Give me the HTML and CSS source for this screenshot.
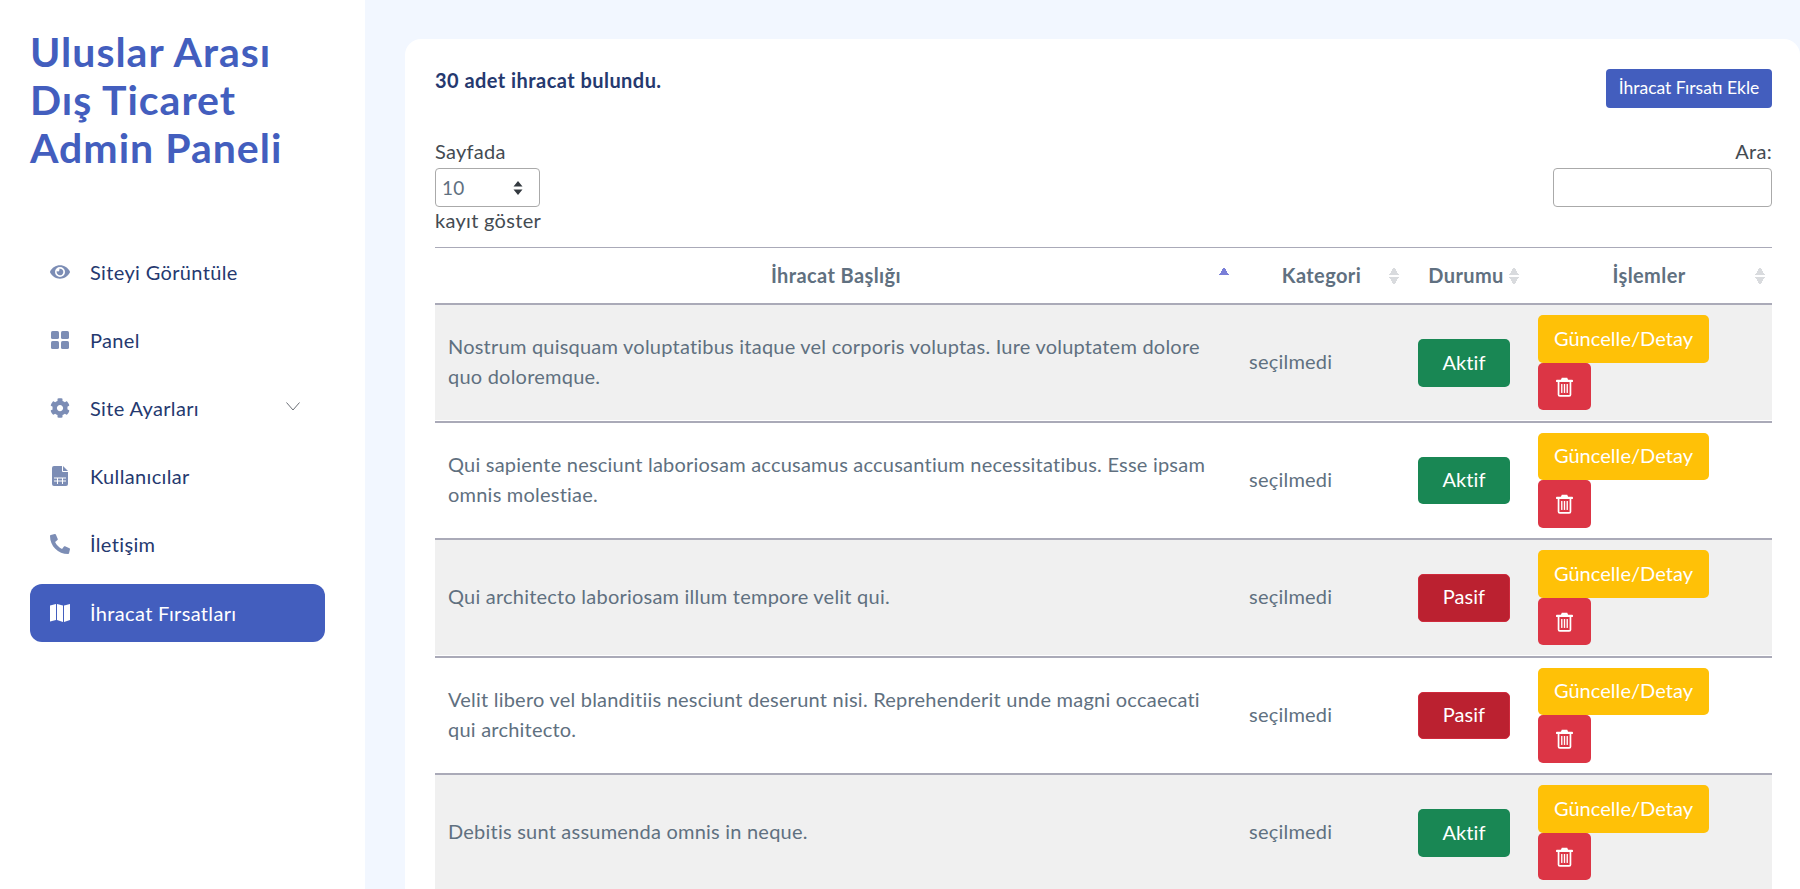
FILE: index.html
```html
<!DOCTYPE html>
<html lang="tr">
<head>
    <meta charset="UTF-8">
    <meta name="viewport" content="width=device-width, initial-scale=1.0">
    <title>Admin Paneli</title>
    <link rel="stylesheet" href="styles.css">
</head>
<body>
    <svg class="sprite">
        <symbol id="trash" viewBox="0 0 20 23">
            <rect x="0" y="3" width="20" height="2.600" rx="1"/>
            <path d="M5.500 3.500 6.800.6h6.400l1.300 2.900z"/>
            <path d="M2 5v15.500A2.500 2.500 0 0 0 4.500 23h11a2.500 2.500 0 0 0 2.500-2.500V5h-2v15.500a.5.5 0 0 1-.5.5h-11a.5.5 0 0 1-.5-.5V5z"/>
            <rect x="6" y="8" width="1.600" height="10.500"/>
            <rect x="9.200" y="8" width="1.600" height="10.500"/>
            <rect x="12.400" y="8" width="1.600" height="10.500"/>
        </symbol>
    </svg>

    <div class="shell">
        <aside class="sidebar">
            <h1 class="brand">Uluslar Arası<br>Dış Ticaret<br>Admin Paneli</h1>
            <nav class="menu">
                <a class="menu-item">
                    <svg class="menu-icon" viewBox="0 0 576 512"><path d="M572.52 241.4C518.29 135.59 410.93 64 288 64S57.68 135.64 3.48 241.41a32.35 32.35 0 0 0 0 29.19C57.71 376.41 165.07 448 288 448s230.32-71.64 284.52-177.41a32.35 32.35 0 0 0 0-29.19zM288 400a144 144 0 1 1 144-144 143.93 143.93 0 0 1-144 144zm0-240a95.31 95.31 0 0 0-25.31 3.79 47.85 47.85 0 0 1-66.9 66.9A95.78 95.78 0 1 0 288 160z"/></svg>
                    <span>Siteyi Görüntüle</span>
                </a>
                <a class="menu-item">
                    <svg class="menu-icon" viewBox="0 0 20 20"><rect x="1" y="1" width="8" height="8" rx="1.6"/><rect x="11" y="1" width="8" height="8" rx="1.6"/><rect x="1" y="11" width="8" height="8" rx="1.6"/><rect x="11" y="11" width="8" height="8" rx="1.6"/></svg>
                    <span>Panel</span>
                </a>
                <a class="menu-item">
                    <svg class="menu-icon" viewBox="0 0 512 512"><path d="M487.4 315.7l-42.6-24.6c4.3-23.2 4.3-47 0-70.2l42.6-24.6c4.9-2.8 7.1-8.6 5.5-14-11.1-35.6-30-67.8-54.7-94.6-3.8-4.1-10-5.1-14.8-2.3L380.8 110c-17.9-15.4-38.5-27.3-60.8-35.1V25.8c0-5.6-3.9-10.5-9.4-11.7-36.7-8.2-74.3-7.8-109.2 0-5.5 1.2-9.4 6.1-9.4 11.7V75c-22.2 7.9-42.8 19.8-60.8 35.1L88.7 85.5c-4.9-2.8-11-1.9-14.8 2.3-24.7 26.7-43.6 58.9-54.7 94.6-1.7 5.4.6 11.2 5.5 14L67.3 221c-4.3 23.2-4.3 47 0 70.2l-42.6 24.6c-4.9 2.8-7.1 8.6-5.5 14 11.1 35.6 30 67.8 54.7 94.6 3.8 4.1 10 5.1 14.8 2.3l42.6-24.6c17.9 15.4 38.5 27.3 60.8 35.1v49.2c0 5.6 3.9 10.5 9.4 11.7 36.7 8.2 74.3 7.8 109.2 0 5.5-1.2 9.4-6.1 9.4-11.7v-49.2c22.2-7.9 42.8-19.8 60.8-35.1l42.6 24.6c4.9 2.8 11 1.9 14.8-2.3 24.7-26.7 43.6-58.9 54.7-94.6 1.5-5.5-.7-11.3-5.6-14.1zM256 336c-44.1 0-80-35.9-80-80s35.9-80 80-80 80 35.9 80 80-35.9 80-80 80z"/></svg>
                    <span>Site Ayarları</span>
                    <svg class="menu-caret" viewBox="0 0 14 9"><path d="M.5.5 7 8l6.500-7.500"/></svg>
                </a>
                <a class="menu-item">
                    <svg class="menu-icon" viewBox="0 0 20 20"><path d="M4 0h8v5a1 1 0 0 0 1 1h5v12a2 2 0 0 1-2 2H4a2 2 0 0 1-2-2V2a2 2 0 0 1 2-2z"/><path d="M13 0l5 5h-5z"/><path class="file-grid" d="M4 12h12M4 15h12M7.500 12v6M12.500 12v6"/></svg>
                    <span>Kullanıcılar</span>
                </a>
                <a class="menu-item">
                    <svg class="menu-icon flip" viewBox="0 0 512 512"><path d="M493.4 24.6l-104-24c-11.3-2.6-22.9 3.3-27.5 13.9l-48 112c-4.2 9.8-1.4 21.3 6.9 28l60.6 49.6c-36 76.7-98.9 140.5-177.2 177.2l-49.6-60.6c-6.800-8.300-18.200-11.100-28-6.900l-112 48C3.900 366.500-2 378.100.6 389.400l24 104C27.100 504.200 36.700 512 48 512c256.100 0 464-207.500 464-464 0-11.200-7.700-20.900-18.600-23.400z"/></svg>
                    <span>İletişim</span>
                </a>
                <a class="menu-item active">
                    <svg class="menu-icon" viewBox="0 0 20 20"><path d="M0 2.500 6 1v16l-6 1.500zM7 1l6 1.500V19l-6-2zM14 2.500 20 1v16l-6 2z"/></svg>
                    <span>İhracat Fırsatları</span>
                </a>
            </nav>
        </aside>

        <main class="content">
            <section class="card">
                <div class="card-top">
                    <p class="count">30 adet ihracat bulundu.</p>
                    <a class="btn-add">İhracat Fırsatı Ekle</a>
                </div>

                <div class="filters">
                    <div class="length-filter">
                        <label>Sayfada</label>
                        <div class="select-box">
                            <span>10</span>
                            <svg class="select-arrows" viewBox="0 0 10 16"><path d="M5 1 9.500 6.500h-9zM5 15 .5 9.500h9z"/></svg>
                        </div>
                        <label>kayıt göster</label>
                    </div>
                    <div class="search-filter">
                        <label>Ara:</label>
                        <input type="text" class="search-input">
                    </div>
                </div>

                <table class="data-table">
                    <colgroup>
                        <col class="col-title">
                        <col class="col-cat">
                        <col class="col-status">
                        <col class="col-actions">
                    </colgroup>
                    <thead>
                        <tr>
                            <th>İhracat Başlığı<span class="sort sort-asc"></span></th>
                            <th>Kategori<span class="sort"></span></th>
                            <th>Durumu<span class="sort"></span></th>
                            <th>İşlemler<span class="sort"></span></th>
                        </tr>
                    </thead>
                    <tbody>
                        <tr>
                            <td>Nostrum quisquam voluptatibus itaque vel corporis voluptas. Iure voluptatem dolore quo doloremque.</td>
                            <td>seçilmedi</td>
                            <td><a class="btn btn-status aktif">Aktif</a></td>
                            <td>
                                <a class="btn btn-edit">Güncelle/Detay</a>
                                <a class="btn btn-delete"><svg class="trash"><use href="#trash"/></svg></a>
                            </td>
                        </tr>
                        <tr>
                            <td>Qui sapiente nesciunt laboriosam accusamus accusantium necessitatibus. Esse ipsam omnis molestiae.</td>
                            <td>seçilmedi</td>
                            <td><a class="btn btn-status aktif">Aktif</a></td>
                            <td>
                                <a class="btn btn-edit">Güncelle/Detay</a>
                                <a class="btn btn-delete"><svg class="trash"><use href="#trash"/></svg></a>
                            </td>
                        </tr>
                        <tr>
                            <td>Qui architecto laboriosam illum tempore velit qui.</td>
                            <td>seçilmedi</td>
                            <td><a class="btn btn-status pasif">Pasif</a></td>
                            <td>
                                <a class="btn btn-edit">Güncelle/Detay</a>
                                <a class="btn btn-delete"><svg class="trash"><use href="#trash"/></svg></a>
                            </td>
                        </tr>
                        <tr>
                            <td>Velit libero vel blanditiis nesciunt deserunt nisi. Reprehenderit unde magni occaecati qui architecto.</td>
                            <td>seçilmedi</td>
                            <td><a class="btn btn-status pasif">Pasif</a></td>
                            <td>
                                <a class="btn btn-edit">Güncelle/Detay</a>
                                <a class="btn btn-delete"><svg class="trash"><use href="#trash"/></svg></a>
                            </td>
                        </tr>
                        <tr>
                            <td>Debitis sunt assumenda omnis in neque.</td>
                            <td>seçilmedi</td>
                            <td><a class="btn btn-status aktif">Aktif</a></td>
                            <td>
                                <a class="btn btn-edit">Güncelle/Detay</a>
                                <a class="btn btn-delete"><svg class="trash"><use href="#trash"/></svg></a>
                            </td>
                        </tr>
                    </tbody>
                </table>
            </section>
        </main>
    </div>
</body>
</html>
```

FILE: styles.css
```css
html, body {
    height: 889px;
    overflow: hidden;
}
body {
    margin: 0;
    font-family: "Lato", "Noto Sans", sans-serif;
    font-size: 20px;
    line-height: 27px;
    color: #607080;
    background-color: #f2f7ff;
}
.sprite {
    display: none;
}
.shell {
    display: flex;
    height: 889px;
}

/* sidebar */
.sidebar {
    width: 365px;
    flex-shrink: 0;
    background: white;
    padding: 28px 30px 0 30px;
    box-sizing: border-box;
}
.brand {
    margin: 0;
    font-size: 41px;
    line-height: 48px;
    font-weight: 700;
    letter-spacing: 1px;
    color: #435ebe;
}
.menu {
    margin-top: 71px;
    width: 295px;
    display: flex;
    flex-direction: column;
    gap: 10px;
}
.menu-item {
    display: flex;
    align-items: center;
    height: 58px;
    padding: 0 20px;
    border-radius: 12px;
    color: #25396f;
    letter-spacing: 0.35px;
}
.menu-item span {
    line-height: 25px;
}
.menu-icon {
    width: 20px;
    height: 20px;
    margin-right: 20px;
    fill: #7c8db5;
    flex-shrink: 0;
}
.flip {
    transform: scaleX(-1);
}
.file-grid {
    fill: none;
    stroke: white;
    stroke-width: 1;
}
.menu-caret {
    width: 14px;
    height: 9px;
    margin-left: auto;
    margin-top: -3px;
    margin-right: 5px;
    fill: none;
    stroke: #6b6f76;
    stroke-width: 1;
}
.menu-item.active {
    margin-top: 1px;
    background-color: #435ebe;
    color: white;
}
.menu-item.active .menu-icon {
    fill: white;
}

/* card */
.content {
    flex: 1;
    padding: 39px 0 0 40px;
    min-width: 0;
}
.card {
    background: white;
    border-radius: 16px 16px 0 0;
    padding: 30px 28px 0 30px;
}
.card-top {
    display: flex;
    justify-content: space-between;
    align-items: flex-start;
}
.count {
    margin: -2px 0 0 0;
    color: #25396f;
    font-weight: 700;
    letter-spacing: 0.45px;
}
.btn-add {
    display: block;
    height: 39px;
    line-height: 38px;
    width: 166px;
    box-sizing: border-box;
    text-align: center;
    background-color: #435ebe;
    color: white;
    font-size: 17.5px;
    border-radius: 4px;
}
.filters {
    display: flex;
    justify-content: space-between;
    margin-top: 31px;
    margin-bottom: 12px;
    color: #444b52;
    letter-spacing: 0.3px;
}
.filters label {
    display: block;
    height: 27px;
    line-height: 25px;
    white-space: nowrap;
}
.length-filter {
    width: 105px;
}
.search-filter {
    width: 219px;
    text-align: right;
}
.select-box {
    display: flex;
    align-items: center;
    justify-content: space-between;
    box-sizing: border-box;
    height: 39px;
    margin: 2px 0 1px 0;
    padding: 0 16px 0 6px;
    border: 1px solid #aaaaaa;
    border-radius: 4px;
    color: #607080;
    font-size: 19px;
}
.select-arrows {
    width: 10px;
    height: 16px;
    fill: #343a40;
}
.search-input {
    display: block;
    width: 100%;
    box-sizing: border-box;
    height: 39px;
    margin-top: 2px;
    border: 1px solid #aaaaaa;
    border-radius: 4px;
    background: white;
}

/* table */
.data-table {
    width: 1337px;
    table-layout: fixed;
    border-collapse: separate;
    border-spacing: 0;
    border-top: 1px solid #aaaab8;
}
.col-title { width: 802px; }
.col-cat { width: 169px; }
.col-status { width: 120px; }
.col-actions { width: 246px; }
.data-table th {
    position: relative;
    height: 57px;
    padding: 0;
    box-sizing: border-box;
    font-weight: 700;
    letter-spacing: 0.4px;
    text-align: center;
    color: #607080;
    border-bottom: 2px solid #aaaab8;
}
.sort {
    position: absolute;
    right: 7px;
    top: 19px;
    width: 10px;
    height: 18px;
    background:
        linear-gradient(to bottom right, transparent 50%, #d9dbde 50%) left top / 5px 8px no-repeat,
        linear-gradient(to bottom left, transparent 50%, #d9dbde 50%) right top / 5px 8px no-repeat,
        linear-gradient(to top right, transparent 50%, #d9dbde 50%) left bottom / 5px 8px no-repeat,
        linear-gradient(to top left, transparent 50%, #d9dbde 50%) right bottom / 5px 8px no-repeat;
}
.sort-asc {
    right: 8px;
    height: 8px;
    background:
        linear-gradient(to bottom right, transparent 50%, #7a7fd8 50%) left top / 5px 8px no-repeat,
        linear-gradient(to bottom left, transparent 50%, #7a7fd8 50%) right top / 5px 8px no-repeat;
}
.data-table td {
    padding: 10px 13px;
    border-bottom: 2px solid #aaaab8;
    vertical-align: middle;
    line-height: 30px;
    letter-spacing: 0.22px;
}
.data-table td:nth-child(-n+2) {
    padding-top: 7px;
}
.data-table td + td {
    padding-left: 12px;
}
.data-table tbody tr:nth-child(odd) td {
    padding-bottom: 11px;
    background-color: #f0f0f0;
    box-shadow: inset 0 -1px 0 white;
}

/* buttons */
.btn {
    display: block;
    box-sizing: border-box;
    height: 47px;
    line-height: 45px;
    text-align: center;
    color: white;
    border-radius: 5px;
    letter-spacing: 0.05px;
}
tr:nth-child(odd) .btn-status,
tr:nth-child(odd) .btn-edit {
    height: 48px;
    line-height: 46px;
}
tr:nth-child(even) .btn-delete {
    height: 48px;
}
.btn-status {
    width: 92px;
}
.aktif {
    background-color: #198754;
}
tr .btn.pasif {
    background-color: #bb2130;
    border: 1px solid #cf2a3c;
    line-height: 42px;
}
.btn-edit {
    width: 171px;
    background-color: #ffc107;
}
.btn-delete {
    width: 53px;
    background-color: #dc3545;
    display: flex;
    align-items: center;
    justify-content: center;
}
.trash {
    width: 17px;
    height: 20px;
    fill: white;
}
```
